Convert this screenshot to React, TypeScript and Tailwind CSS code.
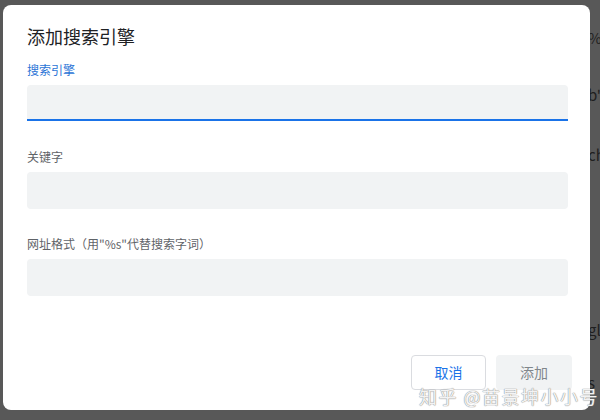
import React from "react";

const font = { fontFamily: '"Noto Sans CJK SC", "Noto Sans", sans-serif' };

export default function App() {
  return (
    <div className="relative w-[600px] h-[420px] overflow-hidden bg-[#585858]" style={font}>
      {/* page underneath the overlay */}
      <div className="absolute left-[588px] top-0 w-[60px] h-full text-[15px] text-[#1f1f1f] leading-[20px]">
        <div className="absolute top-[28px] left-0">%s</div>
        <div className="absolute top-[85px] left-0">b'</div>
        <div className="absolute top-[145px] left-0">ch</div>
        <div className="absolute top-[320px] left-0">gl</div>
        <div className="absolute top-[373px] left-0">s</div>
      </div>

      {/* dialog */}
      <div className="absolute left-[3px] top-[5px] w-[587px] h-[405px] rounded-[8px] bg-white flex flex-col pl-[24px]">
        <h1 className="mt-[19px] text-[18px] leading-[24px] text-[#202124] font-normal">添加搜索引擎</h1>

        <label className="mt-[14px] text-[12px] leading-[16px] text-[#2b74d6]">搜索引擎</label>
        <div className="mt-[7px] w-[541px] h-[36px] bg-[#f1f3f4] rounded-t-[4px] border-b-2 border-[#1a73e8]" />

        <label className="mt-[28px] text-[12px] leading-[16px] text-[#5f6368]">关键字</label>
        <div className="mt-[7px] w-[541px] h-[37px] bg-[#f1f3f4] rounded-[4px]" />

        <label className="mt-[27px] text-[12px] leading-[16px] text-[#5f6368]">网址格式（用"%s"代替搜索字词）</label>
        <div className="mt-[7px] w-[541px] h-[37px] bg-[#f1f3f4] rounded-[4px]" />

        <div className="mt-[59px] flex justify-end gap-[10px] pr-[18px]">
          <button className="w-[75px] h-[35px] rounded-[4px] border border-[#dadce0] bg-white text-[14px] text-[#1a73e8]">取消</button>
          <button className="w-[76px] h-[35px] rounded-[4px] bg-[#f1f3f4] text-[14px] text-[#80868b]">添加</button>
        </div>
      </div>

      {/* watermark */}
      <div
        className="absolute left-[419px] top-[384px] text-[18px] leading-[24px] text-white/90 tracking-[1.5px] whitespace-nowrap"
        style={{ textShadow: "0 0 1px #888, 0 0 1px #888" }}
      >
        知乎 @苗景坤小小号
      </div>
    </div>
  );
}
